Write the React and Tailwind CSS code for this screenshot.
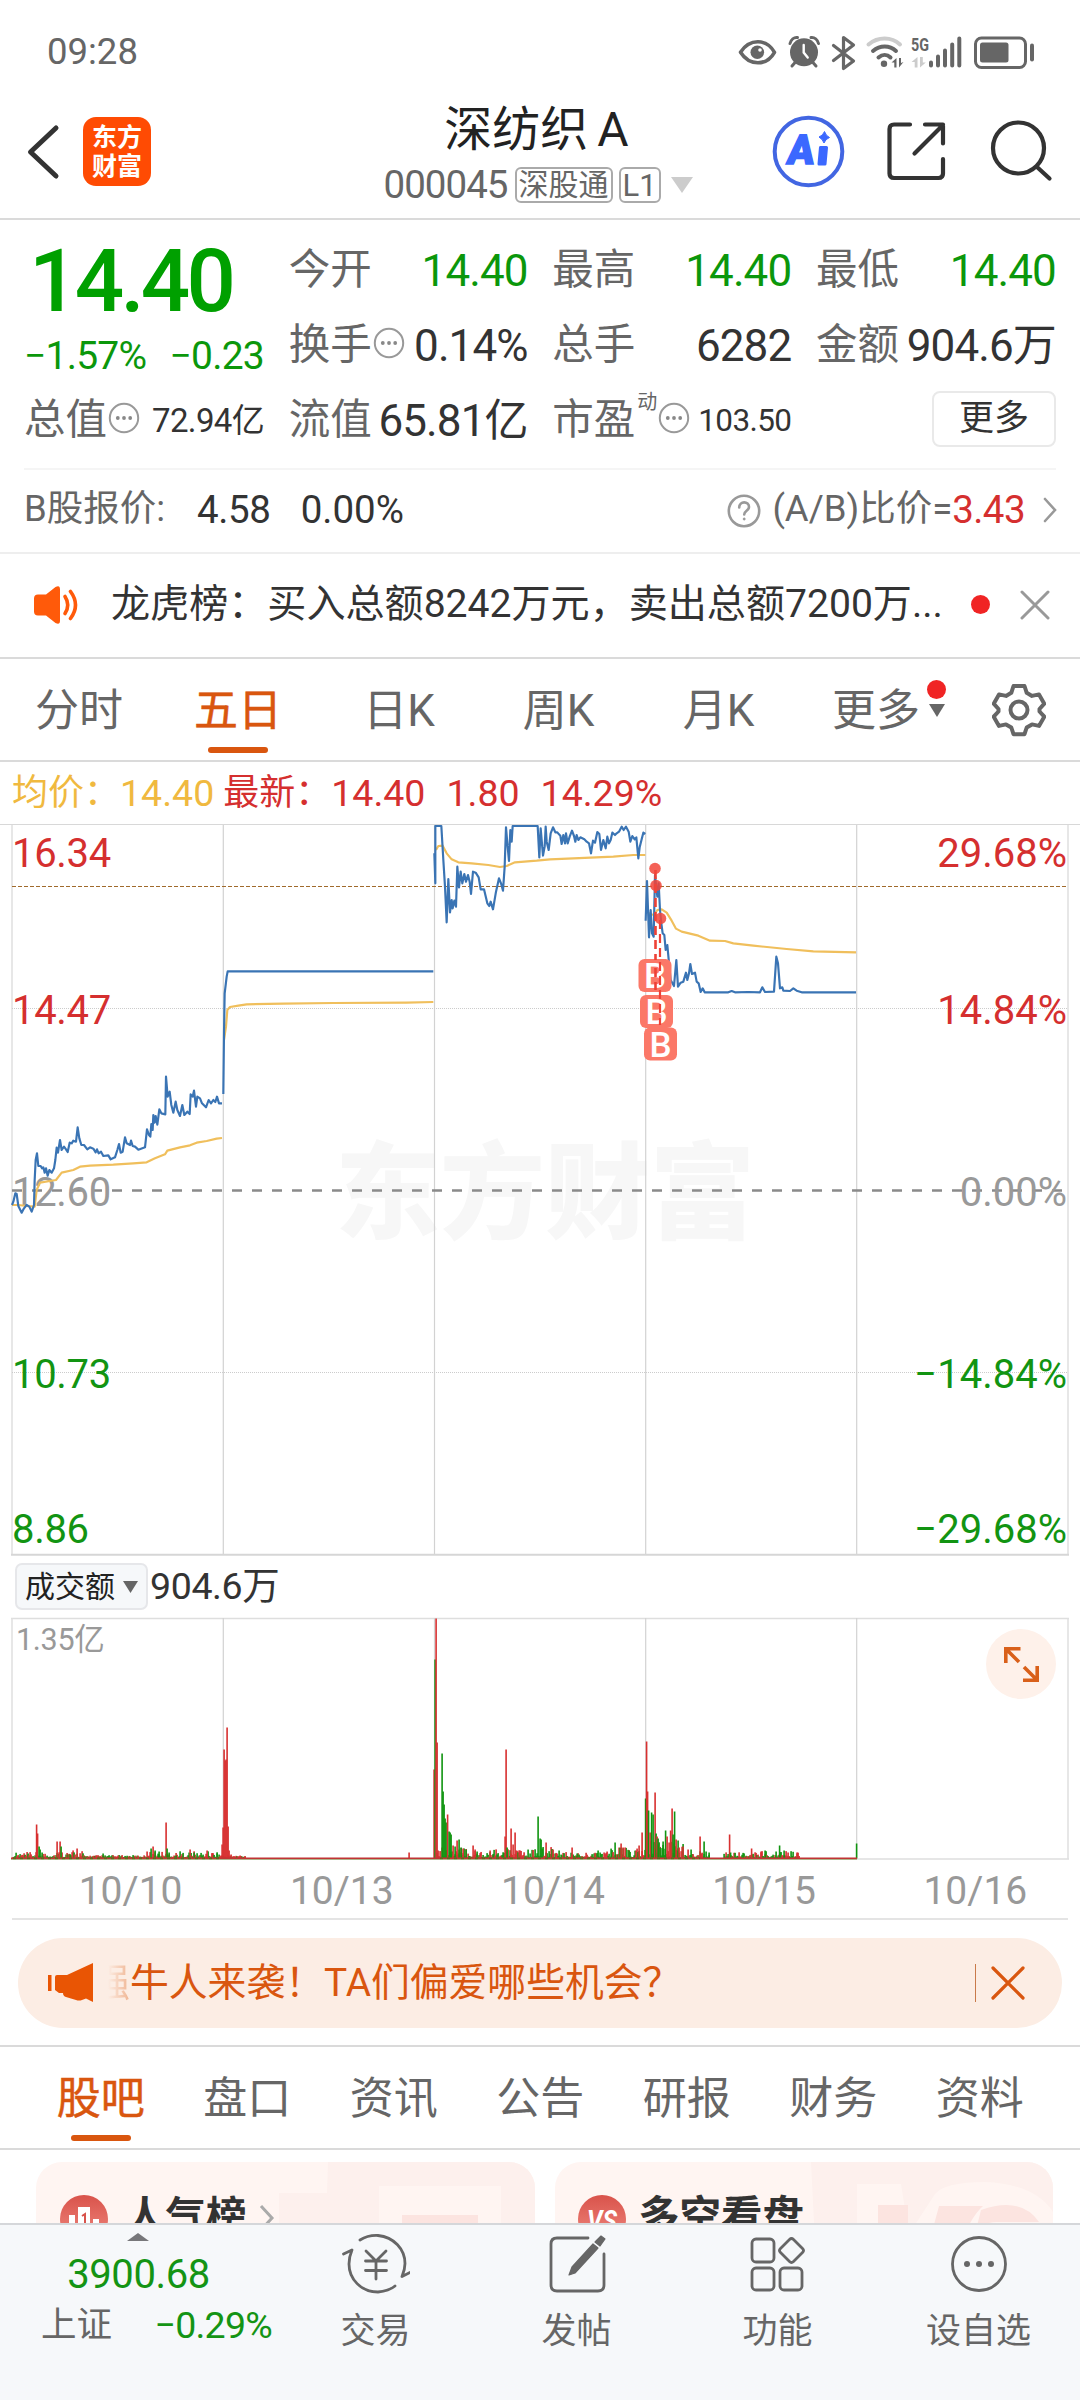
import React from 'react';

// Price lines are sampled at 3 units per pixel, one entry per trading day
const priceDays = [
  {
    id: '10/10',
    x: 0,
    y: 820,
    price:
      '36,1155 40,1145 46,1120 50,1122 55,1158 65,1178 72,1165 80,1155 88,1160 95,1175 102,1155 104,1080 107,1020 111,1000 115,1038 122,1038 126,1045 130,1042 134,1058 138,1045 143,1067 148,1050 155,1058 162,1045 166,1020 170,983 174,998 180,960 185,990 192,980 198,988 203,996 209,968 215,970 220,962 228,965 233,922 238,955 244,975 252,975 262,988 270,982 280,986 287,997 291,988 296,1000 303,995 310,1008 325,1006 332,1018 345,1012 352,990 357,972 362,998 368,995 375,952 380,970 390,975 393,962 398,978 405,980 415,989 435,982 441,928 447,945 451,950 454,912 458,930 460,885 464,908 467,888 472,914 478,868 484,880 496,883 498,770 503,830 509,815 514,855 520,878 527,845 532,870 540,888 547,855 553,885 562,875 569,882 572,823 578,830 582,812 588,860 592,830 600,835 606,850 618,862 626,840 633,850 640,840 646,846 651,830 657,850 666,850',
    avg: '36,1155 55,1155 80,1158 104,1160 110,1110 120,1088 150,1083 168,1080 185,1058 220,1050 240,1040 270,1037 340,1034 400,1030 440,1027 465,1015 495,1003 502,992 540,982 570,976 590,968 620,963 650,956 666,954',
  },
  {
    id: '10/13',
    x: 0,
    y: 820,
    price: '670,822 672,640 674,520 680,470 683,454 1300,454',
    avg: '672,660 678,620 682,570 690,561 715,557 740,553 850,551 1000,549 1220,548 1300,546',
  },
  {
    id: '10/14',
    x: 400,
    y: 800,
    price:
      '103,160 106,250 106,78 124,78 130,180 135,260 140,367 145,237 150,337 155,300 158,325 163,302 168,320 172,200 177,262 182,215 187,250 193,222 198,245 204,225 209,245 213,282 219,215 227,218 236,232 242,268 252,268 262,310 268,318 272,305 279,328 288,275 297,235 303,250 309,272 314,200 318,82 322,130 327,183 331,90 335,125 338,78 413,78 418,172 422,85 429,167 434,140 437,80 440,125 446,150 452,100 459,82 466,97 472,97 477,103 481,107 485,132 490,105 495,130 498,100 503,130 509,110 516,92 522,108 526,125 530,105 535,120 541,112 547,115 553,118 560,125 567,130 573,160 579,122 585,128 592,96 598,102 603,150 610,120 617,145 622,110 627,130 632,120 637,98 645,105 650,100 657,95 665,80 671,90 678,80 686,95 691,125 697,108 704,118 709,112 715,175 719,142 725,118 730,98 736,102',
    avg: '108,150 115,138 128,137 140,160 155,178 175,187 215,190 265,195 300,201 320,198 345,187 410,182 450,178 520,175 640,170 700,165 736,165',
  },
  {
    id: '10/15',
    x: 400,
    y: 800,
    price:
      '737,362 741,243 747,412 752,330 756,400 761,410 765,225 772,290 776,250 780,330 784,370 788,400 793,405 797,450 802,435 806,478 812,540 822,558 829,480 834,560 842,548 850,545 858,518 862,540 867,520 871,492 876,522 885,518 890,545 896,550 902,576 908,565 914,577 985,577 995,573 1005,577 1045,576 1080,577 1087,562 1095,576 1122,575 1129,470 1134,490 1140,565 1147,562 1150,572 1170,573 1180,565 1190,572 1205,577 1368,577',
    avg: '741,335 750,342 762,345 772,330 785,328 800,338 815,362 828,386 845,395 895,407 930,422 975,423 1000,430 1060,437 1160,447 1240,454 1368,457',
  },
];

// [x, height, direction]
const volumeBars = [
  [36.5, 34, 'r'], [37.5, 25, 'r'], [39, 12, 'g'], [40, 9, 'g'], [42, 6, 'g'], [57, 17, 'r'], [60, 17, 'r'], [61, 12, 'g'],
  [77, 10, 'r'], [103, 5, 'g'], [118, 3, 'r'], [147, 7, 'r'], [151, 10, 'g'], [153, 12, 'r'], [155, 8, 'g'], [159, 7, 'g'],
  [166, 36, 'r'], [167, 10, 'g'], [169, 6, 'g'], [176, 3, 'g'], [190, 9, 'r'], [194, 6, 'g'], [207, 8, 'r'], [212, 5, 'r'],
  [217, 5, 'g'], [222, 14, 'r'], [223, 31, 'r'], [224, 109, 'r'], [225, 98, 'r'], [226, 99, 'r'], [227, 131, 'r'],
  [228, 32, 'r'], [229, 8, 'r'], [231, 4, 'r'], [240, 3, 'r'], [245, 2, 'r'], [409, 6, 'r'],
  [434, 89, 'r'], [435, 199, 'g'], [436, 240, 'r'], [437, 116, 'r'], [438, 8, 'r'], [442, 105, 'g'], [443, 67, 'g'],
  [444, 54, 'g'], [445, 40, 'g'], [446, 36, 'g'], [447.5, 44, 'r'], [449, 27, 'g'], [450, 26, 'g'], [451, 24, 'g'],
  [453, 13, 'r'], [455, 12, 'g'], [457, 18, 'r'], [459, 19, 'g'], [461, 11, 'g'], [463, 10, 'r'], [466, 9, 'g'],
  [473, 13, 'r'], [475, 9, 'r'], [477, 7, 'g'], [490, 8, 'r'], [505, 22, 'r'], [506, 109, 'r'], [507, 11, 'g'],
  [511, 30, 'r'], [513, 14, 'r'], [515, 26, 'r'], [516, 8, 'r'], [520, 8, 'r'], [538, 42, 'g'], [540, 20, 'g'],
  [541, 19, 'g'], [546, 16, 'r'], [553, 9, 'r'], [559, 8, 'g'], [572, 11, 'r'], [577, 5, 'g'], [598, 8, 'g'],
  [615, 16, 'g'], [621, 15, 'r'], [623, 11, 'r'], [625, 11, 'r'], [629, 8, 'g'], [636, 8, 'r'], [639, 13, 'r'],
  [642, 26, 'r'], [645.5, 60, 'g'], [646.5, 117, 'r'], [647.5, 67, 'r'], [648.5, 48, 'g'], [650, 26, 'r'],
  [651.5, 46, 'g'], [653, 44, 'g'], [655, 66, 'r'], [656, 25, 'g'], [657, 22, 'r'], [658, 20, 'g'], [660, 11, 'g'],
  [663, 17, 'g'], [665.5, 28, 'g'], [667, 22, 'r'], [669, 16, 'r'], [670.5, 28, 'r'], [672, 50, 'r'], [673, 24, 'g'],
  [674.5, 47, 'g'], [676, 19, 'r'], [678, 18, 'g'], [679, 11, 'r'], [683, 12, 'r'], [688, 9, 'r'], [691, 9, 'g'],
  [700, 22, 'r'], [704, 17, 'g'], [709, 6, 'g'], [729.5, 24, 'r'], [730.5, 6, 'g'], [751.5, 10, 'r'], [761, 7, 'r'],
  [765, 8, 'g'], [776, 7, 'g'], [779.5, 13, 'g'], [784, 8, 'g'], [788, 6, 'r'], [797, 5, 'r'], [856.5, 15, 'g'],
];

// Quiet minutes between the spikes: [from, to, amplitude]
const quietRanges = [
  [13, 56, 5], [56, 84, 7], [84, 145, 2], [145, 222, 6], [222, 246, 2], [437, 470, 10], [470, 537, 8],
  [537, 560, 10], [560, 600, 5], [600, 645, 10], [645, 684, 17], [684, 710, 7], [724, 750, 5], [750, 800, 6],
];

const quietBars = [];
quietRanges.forEach(([from, to, amp]) => {
  for (let x = from; x < to; x += 1) {
    const n = Math.abs(Math.sin(x * 12.9898) * 43758.5453) % 1;
    const m = Math.abs(Math.sin(x * 78.233) * 12543.123) % 1;
    quietBars.push([x, 1.5 + n * n * amp, m > 0.5 ? 'r' : 'g']);
  }
});

const markers = [
  { cx: 655, cy: 868.5, x: 638.5, y: 959 },
  { cx: 656, cy: 885.5, x: 640, y: 995 },
  { cx: 660.5, cy: 918.5, x: 644, y: 1027.5 },
];

const periodTabs = [
  { label: '分时', width: 'w-[158px]' },
  { label: '五日', width: 'w-[160px]', active: true },
  { label: '日K', width: 'w-[162px]' },
  { label: '周K', width: 'w-[157px]' },
  { label: '月K', width: 'w-[163px]' },
];

const infoTabs = ['股吧', '盘口', '资讯', '公告', '研报', '财务', '资料'];

const MoreDots = () => (
  <svg className="h-[32px] w-[32px] shrink-0" viewBox="0 0 32 32" fill="none">
    <circle cx="16" cy="16" r="14.2" stroke="#999" strokeWidth="2" />
    <circle cx="9.8" cy="16" r="1.9" fill="#888" />
    <circle cx="16" cy="16" r="1.9" fill="#888" />
    <circle cx="22.2" cy="16" r="1.9" fill="#888" />
  </svg>
);

const Stat = ({ label, value, green, dots, sup, small }) => (
  <div className="flex h-[75px] items-center justify-between">
    <div className="-ml-[2px] flex items-center text-[41.5px] text-[#666]">
      <span>{label}</span>
      {sup && <span className="ml-[2px] mb-[38px] text-[20px]">{sup}</span>}
      {dots && <span className="mb-[5px] ml-px"><MoreDots /></span>}
    </div>
    <span
      className={`tracking-[-0.02em] ${small ? 'text-[31.5px]' : 'text-[44px]'} ${green ? 'text-[#0b970b]' : 'text-[#333]'}`}
    >
      {value}
    </span>
  </div>
);

const StatusBar = () => (
  <div className="flex h-[84px] items-center justify-between pl-[47px] pr-[42px] pt-[20px]">
    <span className="text-[36.5px] text-[#666]">09:28</span>
    <svg className="h-[44px] w-[302px]" viewBox="736 30 302 44" fill="none">
      {/* eye */}
      <path d="M740.5 52.3c9-14 26-14 34 0c-8 14-25 14-34 0z" stroke="#666" strokeWidth="3.6" strokeLinejoin="round" />
      <circle cx="757.3" cy="52.3" r="6.8" fill="#666" />
      <circle cx="760" cy="50" r="1.8" fill="#fff" />
      {/* alarm */}
      <circle cx="804" cy="52.3" r="14" fill="#666" />
      <path d="M790 43.5c1-4 4-6.5 7.5-6M818.5 43.5c-1-4-4-6.5-7.5-6M795.5 62l-3.5 4M812.5 62l3.5 4" stroke="#666" strokeWidth="3" strokeLinecap="round" />
      <path d="M803.7 45v7.5l4 5" stroke="#fff" strokeWidth="2.4" strokeLinecap="round" />
      {/* bluetooth */}
      <path d="M833.5 45.5l20 15.5l-10 7.5v-31l10 7.5l-20 15.5" stroke="#666" strokeWidth="3.2" strokeLinecap="round" strokeLinejoin="round" />
      {/* wifi */}
      <path d="M868.5 44.5c9.5-8 23-8 31.5 0" stroke="#ccc" strokeWidth="4" strokeLinecap="round" />
      <path d="M873 51c7-6 16.5-6 23 0M878.5 57.5c4-3.5 8.5-3.5 12 0" stroke="#666" strokeWidth="4" strokeLinecap="round" />
      <circle cx="884" cy="63.8" r="3.2" fill="#666" />
      <path d="M891.5 62.5l5-4.5v9.5h-2.2v-5zM899 58h2v5l2.5-1l-4.5 5.5z" fill="#666" />
      {/* mobile signal */}
      <text x="911" y="50.5" fontSize="18.5" fontWeight="700" fill="#666" textLength="18" lengthAdjust="spacingAndGlyphs" fontFamily="Roboto, sans-serif">5G</text>
      <path d="M911.5 62l6-5v10.5h-2.8v-5.5zM920 57h2.8v5.5h3l-5.8 5z" fill="#ccc" />
      <path d="M931 62.5v3M938 56.5v9M945 50.5v15M952.2 44.5v21M959.3 38.5v27" stroke="#666" strokeWidth="4" strokeLinecap="round" />
      {/* battery */}
      <rect x="975.5" y="38" width="50" height="29.5" rx="6" stroke="#666" strokeWidth="3" />
      <rect x="980" y="42.5" width="28.5" height="20" rx="2.5" fill="#666" />
      <path d="M1032 45.5v14" stroke="#666" strokeWidth="4" strokeLinecap="round" />
    </svg>
  </div>
);

const Header = () => (
  <div className="flex h-[136px] items-start justify-between border-b-2 border-[#dadada]">
    <div className="flex w-[380px] items-center pl-[24px] pt-[33px]">
      <svg className="mr-[23px] h-[64px] w-[36px]" viewBox="0 0 36 64" fill="none">
        <path d="M32 8L6.5 32L32 56" stroke="#333" strokeWidth="5" strokeLinecap="round" strokeLinejoin="round" />
      </svg>
      <div className="flex h-[69px] w-[68px] flex-col items-center justify-center rounded-[13px] bg-[#ff4b03] text-[25px] font-bold leading-[29px] text-white">
        <span>东方</span>
        <span>财富</span>
      </div>
    </div>
    <div className="-ml-[7px] flex flex-col items-center pt-[16px]">
      <h1 className="text-[48px] leading-[60px] text-[#222]">深纺织<span className="ml-[9px]">A</span></h1>
      <div className="mt-[6px] flex items-center pl-[4px] text-[#666]">
        <span className="text-[38.5px] leading-[38px] tracking-[-0.025em]">000045</span>
        <span className="ml-[7px] flex h-[36px] items-center rounded-[6px] border-2 border-[#aaa] px-[2px] text-[30px] leading-none">深股通</span>
        <span className="ml-[6px] flex h-[36px] w-[42px] items-center justify-center rounded-[6px] border-2 border-[#aaa] text-[31px] leading-none">L1</span>
        <svg className="ml-[9px] h-[16px] w-[24px]" viewBox="0 0 24 16">
          <path d="M1 0h22L12 16z" fill="#ccc" />
        </svg>
      </div>
    </div>
    <svg className="mt-[28px] h-[80px] w-[380px]" viewBox="700 112 380 80" fill="none">
      <circle cx="808.5" cy="151.5" r="33.8" stroke="#4266e2" strokeWidth="4" />
      <text transform="translate(786 163.5) skewX(-7)" fontSize="41" fontWeight="900" fill="#3b68ff" stroke="#3b68ff" strokeWidth="1.5" textLength="27" lengthAdjust="spacingAndGlyphs" fontFamily="Roboto, sans-serif">A</text>
      <path d="M820.5 147.5h6l-1.5 16.5h-6z" fill="#3b68ff" stroke="#3b68ff" strokeWidth="3" strokeLinejoin="round" />
      <path d="M824.5 131.5q1.5 4.5 5 6q-4 1.5-5.5 5.5q-1.5-4-5-6q4-1.5 5.5-5.5z" fill="#3b68ff" stroke="#3b68ff" />
      <g stroke="#333" strokeWidth="4.2" strokeLinecap="round" strokeLinejoin="round">
        <path d="M910 124.5h-16q-4.5 0-4.5 4.5v44.5q0 4.5 4.5 4.5h44.5q4.5 0 4.5-4.5V159" />
        <path d="M925 124.5h18v19M943 125l-28.5 28.5" />
        <circle cx="1018.5" cy="148" r="25.5" />
        <path d="M1037 167l12.5 11.5" />
      </g>
    </svg>
  </div>
);

const QuoteSummary = () => (
  <div className="px-[24px]">
    <div className="flex h-[248px] justify-between pt-[13px]">
      <div className="flex w-[240px] flex-col">
        <div className="flex h-[96px] items-center pl-[5px] text-[87px] font-medium tracking-[-0.043em] text-[#00a000]">14.40</div>
        <div className="flex h-[54px] items-center justify-between text-[39px] tracking-[-0.02em] text-[#0b970b]">
          <span>−1.57%</span>
          <span>−0.23</span>
        </div>
        <div className="flex h-[75px] items-center justify-between">
          <div className="flex items-center text-[41.5px] text-[#666]">
            总值
            <span className="mb-[5px] ml-px"><MoreDots /></span>
          </div>
          <span className="text-[33px] tracking-[-0.02em] text-[#333]">72.94亿</span>
        </div>
      </div>
      <div className="w-[237px]">
        <Stat label="今开" value="14.40" green />
        <Stat label="换手" value="0.14%" dots />
        <Stat label="流值" value="65.81亿" />
      </div>
      <div className="w-[237px]">
        <Stat label="最高" value="14.40" green />
        <Stat label="总手" value="6282" />
        <Stat label="市盈" value="103.50" sup="动" dots small />
      </div>
      <div className="w-[238px]">
        <Stat label="最低" value="14.40" green />
        <Stat label="金额" value="904.6万" />
        <div className="flex h-[71px] items-center justify-end">
          <button className="h-[56px] w-[124px] rounded-[8px] border-2 border-[#e9e9e9] text-[35px] leading-none text-[#333]">更多</button>
        </div>
      </div>
    </div>
    <div className="flex h-[84px] items-center justify-between border-t-2 border-[#f5f5f5] pb-[3px] text-[36.5px] text-[#666]">
      <div className="flex items-center">
        <span>B股报价:</span>
        <span className="ml-[32px] text-[38.5px] tracking-[-0.01em] text-[#333]">4.58</span>
        <span className="ml-[30px] text-[38.5px] text-[#333]">0.00%</span>
      </div>
      <div className="-mr-[2px] flex items-center">
        <svg className="mr-[10px] h-[36px] w-[36px]" viewBox="0 0 36 36" fill="none" stroke="#999">
          <circle cx="18" cy="19" r="15.2" strokeWidth="2.6" />
          <path d="M13.2 15.5c0-7 10-6.5 9.8-.5c0 3.8-4.8 3.8-4.8 7.5" strokeWidth="2.6" strokeLinecap="round" />
          <circle cx="18.2" cy="27" r="1" fill="#999" />
        </svg>
        <span>(A/B)比价=</span>
        <span className="text-[38.5px] tracking-[-0.015em] text-[#d52f2f]">3.43</span>
        <svg className="ml-[17px] h-[28px] w-[16px]" viewBox="0 0 16 28" fill="none">
          <path d="M3 3l10 11L3 25" stroke="#999" strokeWidth="2.6" strokeLinecap="round" />
        </svg>
      </div>
    </div>
  </div>
);

const NoticeBar = () => (
  <div className="flex h-[107px] items-center border-b-2 border-t-2 border-b-[#dadada] border-t-[#eeeeee] pb-[2px] pl-[32px] pr-[30px]">
    <svg className="h-[44px] w-[48px] shrink-0" viewBox="0 0 48 44" fill="none">
      <path d="M6 11.5h8L23.5 4q4.5-2.5 4.5 2.5v31q0 5-4.5 2.5L14 32.5H6q-4 0-4-4v-13q0-4 4-4z" fill="#ff5a0a" />
      <path d="M33 13.5q5.5 8.5 0 17" stroke="#ff5a0a" strokeWidth="3.6" strokeLinecap="round" />
      <path d="M38.5 8.5q10 13.5 0 27" stroke="#ff5a0a" strokeWidth="3.6" strokeLinecap="round" />
    </svg>
    <span className="ml-[31px] w-[836px] whitespace-nowrap text-[39.1px] text-[#333]">龙虎榜：买入总额8242万元，卖出总额7200万...</span>
    <span className="ml-[24px] h-[19px] w-[19px] rounded-full bg-[#f02424]" />
    <svg className="ml-auto h-[30px] w-[30px]" viewBox="0 0 30 30">
      <path d="M2 2l26 26M28 2L2 28" stroke="#999" strokeWidth="3" strokeLinecap="round" />
    </svg>
  </div>
);

const PeriodTabs = () => (
  <div className="flex h-[103px] items-center border-b-2 border-[#dadada] text-[44px] text-[#666]">
    {periodTabs.map((tab) => (
      <div
        key={tab.label}
        className={`relative flex h-full items-center justify-center pt-[2px] ${tab.width} ${tab.active ? 'text-[#d9560f] [-webkit-text-stroke:0.5px_#d9560f]' : ''}`}
      >
        {tab.label}
        {tab.active && <span className="absolute bottom-[7px] h-[6px] w-[60px] rounded-full bg-[#d9560f]" />}
      </div>
    ))}
    <div className="flex w-[192px] items-center pl-[32px] pt-[2px]">
      更多
      <div className="ml-[7px] flex flex-col items-center">
        <span className="h-[19px] w-[19px] rounded-full bg-[#f02424]" />
        <svg className="mb-[24px] mt-[5px] h-[13px] w-[16px]" viewBox="0 0 16 13">
          <path d="M0 0h16L8 13z" fill="#666" />
        </svg>
      </div>
    </div>
    <svg className="h-[54px] w-[54px]" viewBox="0 0 54 54" fill="none" stroke="#666" strokeWidth="4" strokeLinejoin="round">
      <path d="M21.5 3h11l2.2 6.8l5.3 3.1l7-1.5l5.3 9.3l-4.8 5.3v2.5l4.8 5.2l-5.3 9.2l-7-1.5l-5.3 3.1l-2.2 6.7h-11l-2.2-6.7l-5.3-3.1l-7 1.5l-5.3-9.2l4.8-5.2v-2.5l-4.8-5.3l5.3-9.3l7 1.5l5.3-3.1z" />
      <circle cx="27" cy="27" r="8.5" />
    </svg>
  </div>
);

const PriceChart = () => (
  <svg className="block h-[732px] w-[1080px]" viewBox="0 824 1080 732" fill="none" fontFamily="Roboto, 'Noto Sans CJK SC', sans-serif">
    <text x="335" y="1230" fontSize="105" fontWeight="900" fill="#f7f7f7" fontFamily="'Noto Sans CJK SC', sans-serif">东方财富</text>
    <path d="M0 824.5H1080" stroke="#d8d8d8" />
    <path d="M12 825V1555M1068 825V1555" stroke="#e0e0e0" strokeWidth="1.5" />
    <path d="M223.3 825V1555M434.5 825V1555M645.7 825V1555M856.7 825V1555" stroke="#d2d2d2" strokeWidth="1.2" />
    <path d="M11 1554.8H1069" stroke="#d6d6d6" strokeWidth="2" />
    <path d="M12 1008.5H1068M12 1372.5H1068" stroke="#ccc" strokeDasharray="1 1" />
    <path d="M12 886.5H1068" stroke="#a06a2c" strokeWidth="1.2" strokeDasharray="4 2" />
    <path d="M12 1190.5H1068" stroke="#8a8a8a" strokeWidth="2.4" strokeDasharray="10 10" />

    <g fontSize="40" textAnchor="start" letterSpacing="-0.3">
      <text x="12" y="866.5" fill="#d52f2f">16.34</text>
      <text x="12" y="1023.5" fill="#d52f2f">14.47</text>
      <text x="12" y="1205.5" fill="#999">12.60</text>
      <text x="12" y="1387.5" fill="#129412">10.73</text>
      <text x="12" y="1543" fill="#129412">8.86</text>
    </g>
    <g fontSize="40" textAnchor="end">
      <text x="1067" y="866.5" fill="#d52f2f">29.68%</text>
      <text x="1067" y="1023.5" fill="#d52f2f">14.84%</text>
      <text x="1067" y="1205.5" fill="#999">0.00%</text>
      <text x="1067" y="1387.5" fill="#129412">−14.84%</text>
      <text x="1067" y="1543" fill="#129412">−29.68%</text>
    </g>

    {priceDays.map((day) => (
      <g key={day.id} transform={`translate(${day.x} ${day.y}) scale(0.33333)`} strokeLinejoin="round">
        <polyline points={day.avg} stroke="#f0bf5c" strokeWidth="6.5" />
        <polyline points={day.price} stroke="#3a74b4" strokeWidth="6.5" />
      </g>
    ))}

    {/* Buy markers */}
    {markers.map((m) => (
      <g key={m.y}>
        <rect x={m.x} y={m.y} width="33" height="33" rx="6" fill="#fb7868" />
        <text x={m.x + 16.5} y={m.y + 29} fontSize="35" fontWeight="500" fill="#fff" textAnchor="middle">B</text>
      </g>
    ))}
    <path d="M655.5 870V960M655.5 968V990" stroke="#ee4136" strokeWidth="2.6" strokeDasharray="9 5" />
    <path d="M660 920V1025" stroke="#ee4136" strokeWidth="2.2" strokeDasharray="9 5" />
    {markers.map((m) => (
      <circle key={m.cy} cx={m.cx} cy={m.cy} r="5.8" fill="#f2453a" fillOpacity="0.85" />
    ))}
  </svg>
);

const VolumeChart = () => (
  <div className="relative h-[244px]">
    <svg className="block h-[244px] w-[1080px]" viewBox="0 1617 1080 244" fill="none">
      <path d="M11 1618.5H1069M11 1859H1069" stroke="#dedede" strokeWidth="1.5" />
      <path d="M12 1618V1859M1068 1618V1859" stroke="#e0e0e0" strokeWidth="1.5" />
      <path d="M223.3 1618V1859M434.5 1618V1859M645.7 1618V1859M856.7 1618V1859" stroke="#d2d2d2" strokeWidth="1.2" />
      {[...quietBars, ...volumeBars].map(([x, h, dir], i) => (
        <rect key={i} x={x - 0.7} y={1858.5 - h} width="1.6" height={h} fill={dir === 'r' ? '#d83030' : '#109410'} />
      ))}
      <path d="M11 1858.3H857" stroke="#c03434" strokeWidth="1.8" />
      <path d="M13 1858.3H222M440 1858.3H700" stroke="#5c6a1c" strokeWidth="1.8" strokeDasharray="3 4" />
      <path d="M11 1859.5H857" stroke="#8fae6c" strokeWidth="0.6" />
      <text x="16" y="1650" fontSize="30.5" fill="#999" letterSpacing="-0.3" fontFamily="Roboto, 'Noto Sans CJK SC', sans-serif">1.35亿</text>
    </svg>
    <button className="absolute right-[24px] top-[12px] flex h-[70px] w-[70px] items-center justify-center rounded-full bg-[#fef1ea]">
      <svg className="h-[36px] w-[36px]" viewBox="0 0 36 36" fill="none" stroke="#d9601a" strokeWidth="3.6">
        <path d="M2.8 17V2.8h14.7M3 3l13 13" />
        <path d="M34.2 20v14.2H20M34 34L21 21" />
      </svg>
    </button>
  </div>
);

const PromoBanner = () => (
  <div className="mx-[18px] mt-[18px] flex h-[90px] items-center rounded-full bg-[#fcede4] pl-[29px] pr-[37px] text-[#d9560f]">
    <svg className="h-[42px] w-[48px] shrink-0" viewBox="0 0 48 42" fill="#e95504">
      <path d="M1 13h3.5v16H1zM10 13h10L46 1v39l-7-3.5l-4 1.5q-3 1-6 0l-10-3q-3-1-3-4h-4l-4-3V15q0-2 2-2z" />
    </svg>
    <div className="ml-[13px] flex w-[600px] items-center overflow-hidden whitespace-nowrap text-[38.8px]">
      <span className="flex w-[22px] justify-end overflow-hidden bg-gradient-to-r from-[#fcede4] to-[#efb491] bg-clip-text text-transparent">强</span>
      <span>牛人来袭！TA们偏爱哪些机会？</span>
    </div>
    <span className="ml-auto h-[38px] w-px bg-[#c97a4a]" />
    <svg className="ml-[15px] h-[34px] w-[34px]" viewBox="0 0 34 34">
      <path d="M2 2l30 30M32 2L2 32" stroke="#d9560f" strokeWidth="3.2" strokeLinecap="round" />
    </svg>
  </div>
);

const InfoTabs = () => (
  <div className="mt-[17px] flex h-[105px] items-center border-b-2 border-t-2 border-[#dadada] pl-[27.5px] text-[44px] text-[#666]">
    {infoTabs.map((label, index) => (
      <div
        key={label}
        className={`relative flex h-full w-[146.5px] items-center justify-center pt-[3px] ${index === 0 ? 'text-[#d9560f] [-webkit-text-stroke:0.5px_#d9560f]' : ''}`}
      >
        {label}
        {index === 0 && <span className="absolute bottom-[7px] h-[6px] w-[60px] rounded-full bg-[#d9560f]" />}
      </div>
    ))}
  </div>
);

const RankCards = () => (
  <div className="flex h-[73px] gap-[20px] overflow-hidden pl-[36px] pt-[12px]">
    <div className="relative h-[120px] w-[499px] shrink-0 overflow-hidden rounded-[26px] bg-[#fff5f2]">
      <svg className="absolute left-0 top-0 h-[120px] w-[499px]" viewBox="0 0 499 120">
        <path d="M292 0H499V120H243V31h48z" fill="#fdf0ed" />
        <path d="M343 24h122v96H343z" fill="#fff5f2" />
        <path d="M366 53h76v67h-76z" fill="#fce4e0" />
      </svg>
      <div className="relative flex items-center pl-[24px] pt-[24px]">
        <svg className="h-[48px] w-[48px]" viewBox="0 0 48 48">
          <defs>
            <linearGradient id="badge" x1="0" y1="0" x2="0" y2="1">
              <stop offset="0" stopColor="#d9534b" />
              <stop offset="1" stopColor="#f08a80" />
            </linearGradient>
          </defs>
          <circle cx="24" cy="30" r="24" fill="url(#badge)" />
          <path d="M9 26h6v22H9zM18 18h12v30H18zM33 30h6v18h-6z" fill="#fff" />
          <path d="M22 27l3-2v11" stroke="#d9534b" strokeWidth="2" fill="none" />
        </svg>
        <span className="ml-[17px] mt-[8px] text-[40.5px] font-bold leading-[46px] text-[#333]">人气榜</span>
        <svg className="ml-[12px] mt-[10px] h-[30px] w-[16px]" viewBox="0 0 16 30" fill="none">
          <path d="M2 3l11 12L2 27" stroke="#aaa" strokeWidth="3" />
        </svg>
      </div>
    </div>
    <div className="relative h-[120px] w-[498px] shrink-0 overflow-hidden rounded-[26px] bg-[#fff5f2]">
      <svg className="absolute left-0 top-0 h-[120px] w-[498px]" viewBox="0 0 498 120">
        <path d="M256 0H498V120H262z" fill="#fdf0ed" />
        <path d="M302 22h44l8 50l26-40q10-12 50-12q50 2 68 30v70H302z" fill="#fff5f2" />
        <path d="M323 43h30v60h-30zM384 44h44q-16 14-30 60h-30zM426 48q40-14 58 12h-42q-20 0-24 20z" fill="#fce4e0" />
      </svg>
      <div className="relative flex items-center pl-[23px] pt-[24px]">
        <svg className="h-[48px] w-[48px]" viewBox="0 0 48 48">
          <circle cx="24" cy="30" r="24" fill="url(#badge)" />
          <text x="24" y="42" fontSize="29" fontWeight="700" fontStyle="italic" fill="#fff" textAnchor="middle" textLength="30" lengthAdjust="spacingAndGlyphs" fontFamily="Roboto, sans-serif">VS</text>
        </svg>
        <span className="ml-[12px] mt-[8px] text-[41.5px] font-bold leading-[46px] text-[#333]">多空看盘</span>
      </div>
    </div>
  </div>
);

const NavItem = ({ label, children }) => (
  <div className="flex w-[201px] flex-col items-center">
    <svg className="mt-[7px] h-[64px] w-[68px]" viewBox="0 0 68 64" fill="none" stroke="#666" strokeWidth="2.8" strokeLinecap="round" strokeLinejoin="round">
      {children}
    </svg>
    <span className="mt-[14px] text-[35px] leading-[44px] text-[#666]">{label}</span>
  </div>
);

const BottomNav = () => (
  <div className="flex h-[177px] border-t-2 border-[#d5d7da] bg-[#f6f8fa]">
    <div className="flex w-[275px] flex-col items-center pt-[8px]">
      <svg className="h-[8px] w-[22px]" viewBox="0 0 22 8">
        <path d="M0 8h22L11 0z" fill="#77777a" />
      </svg>
      <span className="mt-[14px] pl-[2px] text-[40px] leading-[40px] tracking-[-0.01em] text-[#149414]">3900.68</span>
      <div className="mt-[10px] flex w-full items-center justify-between pl-[41px] pr-[3px]">
        <span className="text-[35.5px] leading-[40px] text-[#666]">上证</span>
        <span className="text-[37.5px] leading-[40px] tracking-[-0.02em] text-[#149414]">−0.29%</span>
      </div>
    </div>
    <NavItem label="交易">
      <path d="M18 8q8-5 18-4.5c16 1.5 27 14 27 28q0 6-3 13l8-4M53 54q-6 5-17 6C19 60 7 47 7 32q0-7 3-14l-8.5 4" />
      <path d="M24 19l10 10l10-10M34 29v18M23.5 29h21M23.5 38.5h21" />
    </NavItem>
    <NavItem label="发帖">
      <path d="M45 6H14q-6 0-6 6v41q0 6 6 6h41q6 0 6-6V22" />
      <path d="M58 4l4 3l-5 7l-5-4zM50 12l5 4l-23 25l-6 2l3-8z" fill="#666" strokeWidth="1.2" />
    </NavItem>
    <NavItem label="功能">
      <rect x="8" y="7" width="22" height="23" rx="4" />
      <rect x="8" y="36" width="22" height="22" rx="4" />
      <rect x="36" y="36" width="22" height="22" rx="4" />
      <path d="M45.5 7.5q2-2 4 0l9 9q2 2 0 4l-9 9q-2 2-4 0l-9-9q-2-2 0-4z" />
    </NavItem>
    <NavItem label="设自选">
      <circle cx="34" cy="32" r="26.5" />
      <g fill="#666" stroke="none">
        <circle cx="22" cy="32" r="3" />
        <circle cx="34" cy="32" r="3" />
        <circle cx="46" cy="32" r="3" />
      </g>
    </NavItem>
  </div>
);

const App = () => (
  <div className="flex h-[2400px] w-[1080px] flex-col overflow-hidden whitespace-nowrap bg-white font-[Roboto,'Noto_Sans_CJK_SC',sans-serif]">
    <StatusBar />
    <Header />
    <QuoteSummary />
    <NoticeBar />
    <PeriodTabs />

    <div className="flex h-[62px] items-center pl-[12px] text-[36px]">
      <span className="text-[#f0b93f]">均价：</span>
      <span className="text-[37.5px] text-[#f0b93f]">14.40</span>
      <span className="ml-[9px] text-[#d52f2f]">最新：</span>
      <span className="text-[37.5px] text-[#d52f2f]">14.40</span>
      <span className="ml-[21px] text-[37.5px] text-[#d52f2f]">1.80</span>
      <span className="ml-[21px] text-[37.5px] text-[#d52f2f]">14.29%</span>
    </div>

    <PriceChart />

    <div className="flex h-[61px] items-center pl-[15px]">
      <div className="flex h-[47px] w-[133px] items-center rounded-[7px] border-2 border-[#e6e7ea] bg-[#f6f8fa] pl-[8px]">
        <span className="text-[30px] text-[#222]">成交额</span>
        <svg className="ml-[8px] h-[12px] w-[15px]" viewBox="0 0 15 12">
          <path d="M0 0h15L7.5 12z" fill="#666" />
        </svg>
      </div>
      <span className="ml-[2px] text-[37.5px] tracking-[-0.01em] text-[#333]">904.6万</span>
    </div>

    <VolumeChart />

    <div className="mx-[12px] flex h-[59px] items-center border-b-2 border-[#e4e4e4] pt-[3px] text-[39px] text-[#999]">
      {['10/10', '10/13', '10/14', '10/15', '10/16'].map((date) => (
        <span key={date} className="w-[211.2px] pl-[26px] text-center">{date}</span>
      ))}
    </div>

    <PromoBanner />
    <InfoTabs />
    <RankCards />
    <BottomNav />
  </div>
);

export default App;
